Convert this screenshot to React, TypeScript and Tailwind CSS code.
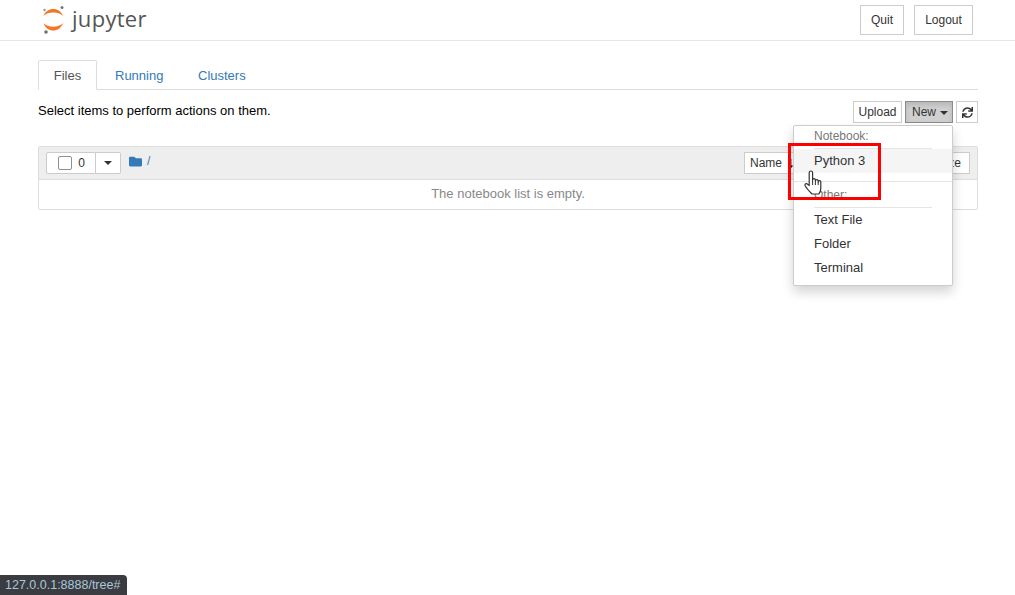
import React from "react";
import { FaSync, FaFolder, FaLongArrowAltDown } from "react-icons/fa";

function Logo() {
  return (
    <svg width="24" height="30" viewBox="0 0 24 30" className="block">
      <path d="M1.5 11 C4.5 1.5 18 1.5 21 11 C16.5 6.4 6 6.4 1.5 11Z" fill="#f37726" />
      <path d="M1.5 18 C4.5 28 18 28 21 18 C16.5 23 6 23 1.5 18Z" fill="#f37726" />
      <circle cx="20" cy="2.5" r="1.5" fill="#767677" />
      <circle cx="2.5" cy="5" r="1.2" fill="#989798" />
      <circle cx="4" cy="27" r="1.8" fill="#6f7070" />
    </svg>
  );
}

function Hand() {
  return (
    <svg width="20" height="26" viewBox="0 0 20 26" className="absolute left-[804px] top-[170px]">
      <path
        d="M5.2 14.5 V2.7 a1.7 1.7 0 0 1 3.4 0 V10 a1.4 1.4 0 0 1 2.8 0 V11 a1.4 1.4 0 0 1 2.8 0 V12 a1.3 1.3 0 0 1 2.6 0 V18 c0 3 -1 5 -2 6 H8 C6 22 3 19 1.3 16 C0.5 14.5 1.5 13 3 13.8 L5.2 15.5 Z"
        fill="#fff"
        stroke="#333"
        strokeWidth="1.2"
        strokeLinejoin="round"
      />
      <path d="M8.6 10 V15 M11.4 11 V15 M14.2 12 V15" stroke="#333" strokeWidth="1" fill="none" />
    </svg>
  );
}

const base = "border text-[#333] text-[12px] leading-[18px] flex items-center";
const btn = `${base} justify-center bg-white border-[#ccc]`;

function Item({ children, hover }: { children: React.ReactNode; hover?: boolean }) {
  return (
    <div className={`h-6 pl-5 leading-[24px] text-[13px] text-[#333] ${hover ? "bg-[#f5f5f5]" : ""}`}>{children}</div>
  );
}

function MenuHeader({ children }: { children: React.ReactNode }) {
  return <div className="h-[18px] pl-5 text-[12px] leading-[18px] text-[#777]">{children}</div>;
}

export default function App() {
  return (
    <div className="relative h-[595px] w-[1015px] overflow-hidden bg-white font-['Liberation_Sans',Arial,sans-serif] text-[13px] text-black">
      <header className="flex h-[41px] items-start justify-between border-b border-[#e7e7e7] pl-[42px] pr-[42px]">
        <div className="flex items-start gap-[6px] pt-[5px]">
          <Logo />
          <span className="pt-[3px] font-['Open_Sans',sans-serif] text-[22px] leading-[20px] tracking-[0.3px] text-[#555]">jupyter</span>
        </div>
        <div className="flex gap-[10px] pt-[5px]">
          <div className={`${btn} h-[30px] w-[44px]`}>Quit</div>
          <div className={`${btn} h-[30px] w-[59px]`}>Logout</div>
        </div>
      </header>

      <main className="ml-[38px] w-[940px] pt-[19px]">
        <nav className="flex h-[30px] border-b border-[#ddd]">
          <div className="h-[30px] w-[59px] rounded-t-[2px] border border-b-white border-[#ddd] bg-white text-center leading-[29px] text-[#555]">Files</div>
          <div className="ml-[2px] w-[81px] pl-[16px] leading-[31px] text-[#337ab7]">Running</div>
          <div className="ml-[2px] w-[70px] pl-[16px] leading-[31px] text-[#337ab7]">Clusters</div>
        </nav>

        <div className="flex items-start justify-between pt-[11px]">
          <div className="text-[13px] leading-[20px]">Select items to perform actions on them.</div>
          <div className="flex gap-[3px]">
            <div className={`${btn} h-[22px] w-[49px]`}>Upload</div>
            <div className={`${base} h-[22px] w-[48px] justify-start gap-[4px] border-[#8c8c8c] bg-[#d0d0d0] pl-[6px] shadow-[inset_0_3px_5px_rgba(0,0,0,0.125)]`}>
              New
              <span className="mt-px border-x-[4px] border-t-[4px] border-x-transparent border-t-[#333]" />
            </div>
            <div className={`${btn} h-[22px] w-[22px]`}>
              <FaSync className="text-[11px] text-[#333]" />
            </div>
          </div>
        </div>

        <section className="mt-[23px] h-[64px] rounded-[2px] border border-[#ddd]">
          <div className="flex h-[33px] items-start justify-between border-b border-[#ddd] bg-[#eee] pl-[7px] pr-[7px] pt-[5px]">
            <div className="flex items-start">
              <div className="flex h-[22px]">
                <div className="flex w-[50px] items-center justify-end gap-[6px] rounded-l-[2px] border border-[#ccc] bg-white pr-[10px] text-[12px] text-[#333]">
                  <span className="h-[14px] w-[14px] rounded-[2px] border border-[#8f8f8f] bg-white" />
                  0
                </div>
                <div className="-ml-px flex w-[26px] items-center justify-center rounded-r-[2px] border border-[#ccc] bg-white">
                  <span className="border-x-[4px] border-t-[4px] border-x-transparent border-t-[#333]" />
                </div>
              </div>
              <div className="ml-[8px] flex h-[18px] items-center gap-[5px] text-[#337ab7]">
                <FaFolder className="text-[13px]" />
                <span className="text-[12px]">/</span>
              </div>
            </div>
            <div className="flex">
              <div className={`${base} h-[22px] w-[56px] justify-start gap-[3px] border-[#ccc] bg-white pl-[5px]`}>
                Name
                <FaLongArrowAltDown className="text-[11px] text-[#111]" />
              </div>
              <div className={`${btn} ml-[4px] h-[22px] w-[96px]`}>Last Modified</div>
              <div className={`${btn} ml-[4px] h-[22px] w-[66px] pl-[4px]`}>File size</div>
            </div>
          </div>
          <div className="h-[29px] text-center text-[13px] leading-[27px] text-[#888]">The notebook list is empty.</div>
        </section>
      </main>

      <div className="absolute left-[793px] top-[125px] h-[161px] w-[160px] rounded-[2px] border border-[#ccc] bg-white pt-[1px] shadow-[0_6px_12px_rgba(0,0,0,0.175)]">
        <MenuHeader>Notebook:</MenuHeader>
        <div className="ml-5 mr-5 mt-[3px] h-px bg-[#e5e5e5]" />
        <Item hover>Python 3</Item>
        <div className="mt-[8px] h-px bg-[#e5e5e5]" />
        <div className="pt-[4px]"><MenuHeader>Other:</MenuHeader></div>
        <div className="ml-5 mr-5 mt-[3px] h-px bg-[#e5e5e5]" />
        <Item>Text File</Item>
        <Item>Folder</Item>
        <Item>Terminal</Item>
      </div>

      <div className="absolute left-[788px] top-[143px] h-[57px] w-[93px] border-[3px] border-[#ff0000]" />
      <Hand />

      <div className="absolute bottom-0 left-0 flex h-[20px] w-[127px] items-center rounded-tr-[4px] bg-[#3a3c42] pl-[5px] text-[12.5px] text-[#a9c7d6]">
        127.0.0.1:8888/tree#
      </div>
    </div>
  );
}
